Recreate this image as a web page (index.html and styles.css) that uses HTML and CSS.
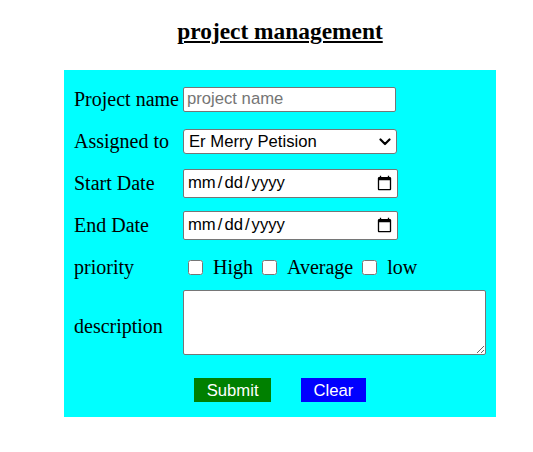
FILE: index.html
```html
<!DOCTYPE html>
<html lang="en">
<head>
<meta charset="utf-8">
<title>project management</title>
<link rel="stylesheet" href="styles.css">
</head>
<body>
<div class="page">
  <h3 class="title">project management</h3>
  <form class="panel">
    <div class="grid">
      <label class="lbl" for="pname">Project name</label>
      <div class="cell"><input id="pname" class="txt" type="text" placeholder="project name"></div>

      <label class="lbl" for="assigned">Assigned to</label>
      <div class="cell">
        <div class="sel-wrap">
          <select id="assigned" class="sel">
            <option>Er Merry Petision</option>
          </select>
          <svg class="chev" width="12" height="8" viewBox="0 0 12 8" aria-hidden="true">
            <path d="M1.5 1.5 L6 6 L10.5 1.5" fill="none" stroke="#000" stroke-width="2.2" stroke-linecap="round" stroke-linejoin="round"/>
          </svg>
        </div>
      </div>

      <label class="lbl" for="sdate">Start Date</label>
      <div class="cell"><input id="sdate" class="date" type="date"></div>

      <label class="lbl" for="edate">End Date</label>
      <div class="cell"><input id="edate" class="date" type="date"></div>

      <span class="lbl">priority</span>
      <div class="cell checks">
        <input class="chk" type="checkbox" id="p1"><label class="chk-lbl" for="p1">High</label>
        <input class="chk" type="checkbox" id="p2"><label class="chk-lbl" for="p2">Average</label>
        <input class="chk" type="checkbox" id="p3"><label class="chk-lbl" for="p3">low</label>
      </div>

      <label class="lbl lbl-desc" for="desc">description</label>
      <div class="cell"><textarea id="desc" class="area"></textarea></div>
    </div>
    <div class="actions">
      <button type="submit" class="btn btn-submit">Submit</button>
      <button type="reset" class="btn btn-clear">Clear</button>
    </div>
  </form>
</div>
</body>
</html>
```

FILE: styles.css
```css
html, body {
  margin: 0;
  padding: 0;
  background: #ffffff;
}

body {
  font-family: "Liberation Serif", "Times New Roman", serif;
  color: #000;
}

.page {
  width: 432px;
  margin-left: 64px;
}

.title {
  margin: 0;
  padding-top: 18px;
  height: 70px;
  box-sizing: border-box;
  text-align: center;
  font-size: 23.4px;
  font-weight: bold;
  text-decoration: underline;
  text-decoration-thickness: 2px;
  text-underline-offset: 2px;
  line-height: 27px;
}

.panel {
  background: #00ffff;
  padding: 8px 10px 15px 10px;
}

.grid {
  display: grid;
  grid-template-columns: 109px 1fr;
  grid-template-rows: repeat(5, 42px) 68px;
  align-items: center;
}

.lbl {
  font-size: 20px;
  line-height: 23px;
}

.lbl-desc {
  padding-top: 8px;
}

.cell {
  display: flex;
  align-items: center;
}

.txt, .sel, .date, .area {
  box-sizing: border-box;
  font-family: "Liberation Sans", Arial, sans-serif;
  font-size: 16.67px;
  border: 1px solid #767676;
  border-radius: 2px;
  background: #fff;
  color: #000;
  margin: 0;
}

.txt {
  width: 213px;
  height: 25px;
  padding: 1px 3px;
}

.txt::placeholder {
  color: #757575;
}

.sel-wrap {
  position: relative;
  display: flex;
}

.sel {
  appearance: none;
  -webkit-appearance: none;
  width: 214px;
  height: 25px;
  padding: 0 24px 0 5px;
  border-radius: 3px;
}

.chev {
  position: absolute;
  right: 6px;
  top: 9px;
  pointer-events: none;
}

.date {
  width: 215px;
  height: 29px;
  padding: 1px 2px 1px 3px;
}

.date::-webkit-datetime-edit-text {
  padding: 0 1px;
}

.chk {
  width: 15px;
  height: 15px;
  margin: 0 10px 0 5px;
}

.chk-lbl {
  font-size: 20px;
  line-height: 23px;
  margin-right: 4px;
}

.area {
  width: 303px;
  height: 65px;
  resize: both;
  padding: 2px;
}

.actions {
  display: flex;
  justify-content: center;
  gap: 30px;
  padding-top: 22px;
}

.btn {
  font-family: "Liberation Sans", Arial, sans-serif;
  font-size: 16.67px;
  line-height: 19px;
  color: #fff;
  border: none;
  border-radius: 0;
  padding: 2.5px 12.5px;
  margin: 0;
  height: 24px;
}

.btn-submit {
  background: #008000;
}

.btn-clear {
  background: #0000ff;
}
```
